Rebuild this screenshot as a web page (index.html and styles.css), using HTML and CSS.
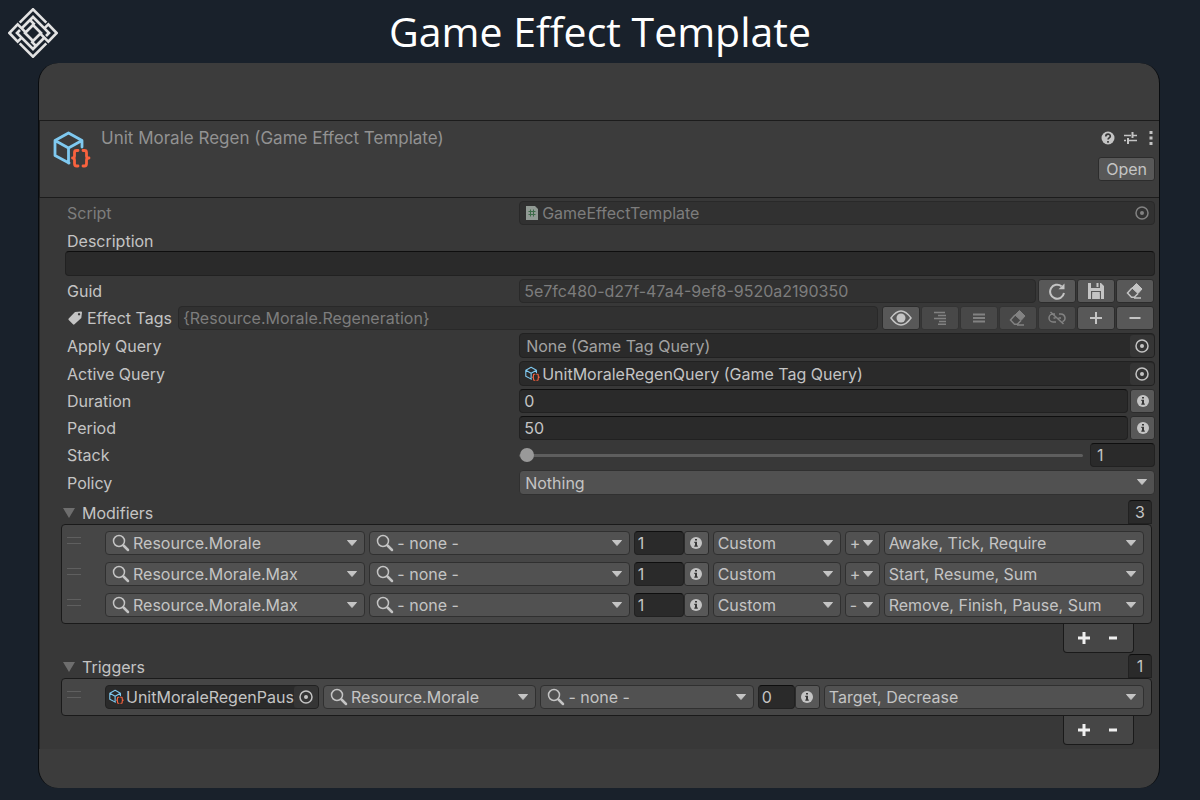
FILE: index.html
```
<!DOCTYPE html>
<html lang="en">
<head>
    <title>Game Effect Template</title>
    <meta charset="UTF-8">
    <link rel="stylesheet" href="styles.css">
</head>
<body>
    <!-- Shared icons -->
    <svg class="sprite" aria-hidden="true">
        <symbol id="cube" viewBox="0 0 38 38">
            <g fill="none" stroke-linejoin="round" stroke-linecap="round">
                <path d="M29 16V9.500L15.500 2 2 9.500V24.500L16 32M2 9.500L15.500 17 29 9.500M15.500 17V32" stroke="#7fc9f0" stroke-width="2.800"/>
                <path d="M25 19.500h-1.500q-2 0-2 2v3.500q0 2-2 2 2 0 2 2v3.500q0 2.500 2 2.500H25M30 19.500h1.500q2 0 2 2v3.500q0 2 2.500 2-2.500 0-2.500 2v3.500q0 2.500-2 2.500H30" stroke="#f9623e" stroke-width="2.800"/>
            </g>
        </symbol>
        <symbol id="search" viewBox="0 0 18 18">
            <circle cx="7" cy="7" r="5.500" fill="none" stroke="currentColor" stroke-width="1.500"/>
            <path d="M11.500 11.500L16 16" stroke="currentColor" stroke-width="2.500" stroke-linecap="round"/>
        </symbol>
        <symbol id="arrow" viewBox="0 0 10 6">
            <path d="M0.500 0.500h9L5 5.500z" fill="currentColor" stroke="currentColor" stroke-linejoin="round"/>
        </symbol>
        <symbol id="target" viewBox="0 0 14 14">
            <circle cx="7" cy="7" r="6" fill="none" stroke="currentColor" stroke-width="1.500"/>
            <circle cx="7" cy="7" r="2" fill="currentColor"/>
        </symbol>
        <symbol id="info" viewBox="0 0 12 12">
            <circle cx="6" cy="6" r="6" fill="currentColor"/>
            <path d="M5 2h2v1.600H5zM4.300 4.800H7v3.700h.8v1.200H4.300V8.500H5V6h-.7z" fill="#383838"/>
        </symbol>
        <symbol id="eraser" viewBox="0 0 18 18">
            <path d="M10.500 1.500L16 7l-4 4.500L6 6z" fill="currentColor" stroke="currentColor" stroke-linejoin="round"/>
            <path d="M6 6L1.500 11l4 4.200h2.800L12 11.500M8 16h7" fill="none" stroke="currentColor" stroke-width="1.500"/>
        </symbol>
    </svg>

    <header class="page-header">
        <svg class="logo" viewBox="0 0 150 150" fill="none" stroke="#e2e2e2" stroke-width="8">
            <path d="M35 44L75 4l40 40M35 106l40 40 40-40"/>
            <path d="M54 74L29 49 4 75l25 26 13-13M96 76l25 25 25-26-25-26-13 13"/>
            <path d="M40 88L27 75l9-9M110 62l13 13-9 9"/>
            <path d="M42 60l33-33 35 35M108 90l-33 33-35-35"/>
            <path d="M75 51l24 24-24 24-24-24z"/>
            <path d="M66 36l14 14M84 114l-14-14"/>
        </svg>
        <h1>Game Effect Template</h1>
    </header>

    <main class="panel">
        <section class="asset">
            <svg class="asset-icon"><use href="#cube"/></svg>
            <h2>Unit Morale Regen (Game Effect Template)</h2>
            <div class="asset-side">
                <div class="asset-tools">
                    <button type="button" class="plain" aria-label="Help">
                        <svg width="14" height="14" viewBox="0 0 14 14"><circle cx="7" cy="7" r="6.500" fill="currentColor"/><path d="M4.800 5.500c0-3 4.500-3 4.500-.3 0 1.700-2.200 1.700-2.200 3.300M7 10v1.700" fill="none" stroke="#383838" stroke-width="1.700"/></svg>
                    </button>
                    <button type="button" class="plain" aria-label="Presets">
                        <svg width="14" height="14" viewBox="0 0 14 14" fill="none" stroke="currentColor"><path d="M1 4.500h7M10 4.500h4M1 9.500h2M5 9.500h9" stroke-width="1.500"/><path d="M9.500 1v6M5 7v6" stroke-width="2"/></svg>
                    </button>
                    <button type="button" class="plain more" aria-label="More">
                        <svg width="4" height="14" viewBox="0 0 4 14" fill="currentColor"><path d="M.5 0h3v3h-3zM.5 5.500h3v3h-3zM.5 11h3v3h-3z"/></svg>
                    </button>
                </div>
                <button type="button" class="open">Open</button>
            </div>
        </section>

        <form class="inspector">
            <div class="row disabled">
                <label for="script">Script</label>
                <div class="field object">
                    <svg class="script-icon" viewBox="0 0 12 14"><path d="M0 0h9l3 3v11H0z" fill="#919a94"/><path d="M4.500 3.500v7M7.500 3.500v7M2.500 5.500h7M2.500 8.500h7" stroke="#3d6b49"/></svg>
                    <input type="text" id="script" value="GameEffectTemplate" disabled>
                    <button type="button" class="pick" aria-label="Pick script" disabled><svg><use href="#target"/></svg></button>
                </div>
            </div>
            <div class="description">
                <label for="description">Description</label>
                <input type="text" id="description" class="field">
            </div>
            <div class="row">
                <label for="guid">Guid</label>
                <div class="group">
                    <input type="text" id="guid" class="field" value="5e7fc480-d27f-47a4-9ef8-9520a2190350" disabled>
                    <div class="buttons">
                        <button type="button" aria-label="Regenerate"><svg width="18" height="18" viewBox="0 0 18 18"><path d="M13.500 4.200A7 7 0 1 0 16 11" fill="none" stroke="currentColor" stroke-width="2"/><path d="M16.500 1.500v5.800h-6z" fill="currentColor"/></svg></button>
                        <button type="button" aria-label="Save"><svg width="18" height="18" viewBox="0 0 18 18"><path fill="currentColor" fill-rule="evenodd" d="M1 1h13l3 3v13H1zM4 1v5h9V1zM4 9v8h1.200v-7h7.600v7H14V9z"/><path d="M9.500 1h2v4h-2zM5.500 12h7v5h-7z" fill="currentColor"/></svg></button>
                        <button type="button" aria-label="Clear"><svg width="18" height="18"><use href="#eraser"/></svg></button>
                    </div>
                </div>
            </div>
            <div class="tags">
                <label for="tags">
                    <svg width="14" height="14" viewBox="0 0 14 14"><path fill="currentColor" fill-rule="evenodd" d="M7 1l6-.5q1 0 1 1L13.300 7 6.500 13.300q-.8.700-1.500 0L.7 9q-.7-.7 0-1.500zM11 2a1.200 1.200 0 1 0 .1 0z"/></svg>
                    Effect Tags
                </label>
                <input type="text" id="tags" class="field" value="{Resource.Morale.Regeneration}" disabled>
                <div class="buttons">
                    <button type="button" aria-label="Show tags"><svg width="22" height="16" viewBox="0 0 22 16"><path d="M1 8q10-14 20 0-10 14-20 0z" fill="none" stroke="currentColor" stroke-width="1.500"/><circle cx="11" cy="8" r="4.500" fill="currentColor"/></svg></button>
                    <button type="button" aria-label="Tree view" disabled><svg width="14" height="14" viewBox="0 0 14 14"><path d="M1 1.500h11M5 4.500h8M1 7.500h12M6 10.500h7M5 13.200h8" stroke="currentColor" stroke-width="1.500"/></svg></button>
                    <button type="button" aria-label="List view" disabled><svg width="14" height="14" viewBox="0 0 14 14"><path d="M1 3.500h12M1 7h12M1 10.500h12" stroke="currentColor" stroke-width="2"/></svg></button>
                    <button type="button" aria-label="Clear tags" disabled><svg width="18" height="18"><use href="#eraser"/></svg></button>
                    <button type="button" aria-label="Unlink" disabled><svg width="18" height="14" viewBox="0 0 18 14" fill="none" stroke="currentColor" stroke-width="1.500"><path d="M7 3H5a4 4 0 0 0 0 8h3M11 3h2a4 4 0 0 1 1.500 7.700M5.500 7h2M10.500 7H13M2.500 1l13 12"/></svg></button>
                    <button type="button" aria-label="Add tag"><svg width="14" height="14" viewBox="0 0 14 14"><path d="M1 7h12M7 1v12" stroke="currentColor" stroke-width="2"/></svg></button>
                    <button type="button" aria-label="Remove tag"><svg width="14" height="14" viewBox="0 0 14 14"><path d="M1.500 7h11" stroke="currentColor" stroke-width="2"/></svg></button>
                </div>
            </div>
            <div class="row">
                <label for="apply">Apply Query</label>
                <div class="field object">
                    <input type="text" id="apply" class="empty" value="None (Game Tag Query)" readonly>
                    <button type="button" class="pick" aria-label="Pick apply query"><svg><use href="#target"/></svg></button>
                </div>
            </div>
            <div class="row">
                <label for="active">Active Query</label>
                <div class="field object">
                    <svg class="cube-small"><use href="#cube"/></svg>
                    <input type="text" id="active" value="UnitMoraleRegenQuery (Game Tag Query)" readonly>
                    <button type="button" class="pick" aria-label="Pick active query"><svg><use href="#target"/></svg></button>
                </div>
            </div>
            <div class="row">
                <label for="duration">Duration</label>
                <div class="group">
                    <input type="text" id="duration" class="field" value="0">
                    <button type="button" class="info" aria-label="Duration info"><svg><use href="#info"/></svg></button>
                </div>
            </div>
            <div class="row">
                <label for="period">Period</label>
                <div class="group">
                    <input type="text" id="period" class="field" value="50">
                    <button type="button" class="info" aria-label="Period info"><svg><use href="#info"/></svg></button>
                </div>
            </div>
            <div class="row">
                <label for="stack">Stack</label>
                <div class="group stack">
                    <input type="range" id="stack" min="1" max="100" value="1">
                    <input type="text" class="field" value="1" aria-label="Stack value">
                </div>
            </div>
            <div class="row">
                <label for="policy">Policy</label>
                <div class="drop policy">
                    <select id="policy"><option>Nothing</option></select>
                    <svg class="arrow"><use href="#arrow"/></svg>
                </div>
            </div>

            <section class="list">
                <div class="list-header">
                    <button type="button" class="plain"><svg width="12" height="10" viewBox="0 0 12 10"><path d="M0 0h12L6 10z" fill="#6e6e6e"/></svg>Modifiers</button>
                    <input type="text" class="field count" value="3" aria-label="Modifiers count">
                </div>
                <div class="items">
                    <div class="item">
                        <span class="handle"></span>
                        <div class="drop with-search"><svg class="search"><use href="#search"/></svg><select aria-label="Resource"><option>Resource.Morale</option></select><svg class="arrow"><use href="#arrow"/></svg></div>
                        <div class="drop with-search"><svg class="search"><use href="#search"/></svg><select aria-label="Source"><option>- none -</option></select><svg class="arrow"><use href="#arrow"/></svg></div>
                        <div class="value"><input type="text" class="field" value="1" aria-label="Value"><button type="button" class="info" aria-label="Value info"><svg><use href="#info"/></svg></button></div>
                        <div class="drop kind"><select aria-label="Kind"><option>Custom</option></select><svg class="arrow"><use href="#arrow"/></svg></div>
                        <div class="drop sign"><select aria-label="Sign"><option>+</option></select><svg class="arrow"><use href="#arrow"/></svg></div>
                        <div class="drop"><select aria-label="Events"><option>Awake, Tick, Require</option></select><svg class="arrow"><use href="#arrow"/></svg></div>
                    </div>
                    <div class="item">
                        <span class="handle"></span>
                        <div class="drop with-search"><svg class="search"><use href="#search"/></svg><select aria-label="Resource"><option>Resource.Morale.Max</option></select><svg class="arrow"><use href="#arrow"/></svg></div>
                        <div class="drop with-search"><svg class="search"><use href="#search"/></svg><select aria-label="Source"><option>- none -</option></select><svg class="arrow"><use href="#arrow"/></svg></div>
                        <div class="value"><input type="text" class="field" value="1" aria-label="Value"><button type="button" class="info" aria-label="Value info"><svg><use href="#info"/></svg></button></div>
                        <div class="drop kind"><select aria-label="Kind"><option>Custom</option></select><svg class="arrow"><use href="#arrow"/></svg></div>
                        <div class="drop sign"><select aria-label="Sign"><option>+</option></select><svg class="arrow"><use href="#arrow"/></svg></div>
                        <div class="drop"><select aria-label="Events"><option>Start, Resume, Sum</option></select><svg class="arrow"><use href="#arrow"/></svg></div>
                    </div>
                    <div class="item">
                        <span class="handle"></span>
                        <div class="drop with-search"><svg class="search"><use href="#search"/></svg><select aria-label="Resource"><option>Resource.Morale.Max</option></select><svg class="arrow"><use href="#arrow"/></svg></div>
                        <div class="drop with-search"><svg class="search"><use href="#search"/></svg><select aria-label="Source"><option>- none -</option></select><svg class="arrow"><use href="#arrow"/></svg></div>
                        <div class="value"><input type="text" class="field" value="1" aria-label="Value"><button type="button" class="info" aria-label="Value info"><svg><use href="#info"/></svg></button></div>
                        <div class="drop kind"><select aria-label="Kind"><option>Custom</option></select><svg class="arrow"><use href="#arrow"/></svg></div>
                        <div class="drop sign"><select aria-label="Sign"><option>-</option></select><svg class="arrow"><use href="#arrow"/></svg></div>
                        <div class="drop"><select aria-label="Events"><option>Remove, Finish, Pause, Sum</option></select><svg class="arrow"><use href="#arrow"/></svg></div>
                    </div>
                </div>
                <div class="list-footer">
                    <button type="button" class="plain" aria-label="Add modifier"><svg width="12" height="12" viewBox="0 0 12 12"><path d="M0 6h12M6 0v12" stroke="currentColor" stroke-width="3"/></svg></button>
                    <button type="button" class="plain" aria-label="Remove modifier"><svg width="12" height="12" viewBox="0 0 12 12"><path d="M2 6h8" stroke="currentColor" stroke-width="3"/></svg></button>
                </div>
            </section>

            <section class="list">
                <div class="list-header">
                    <button type="button" class="plain"><svg width="12" height="10" viewBox="0 0 12 10"><path d="M0 0h12L6 10z" fill="#6e6e6e"/></svg>Triggers</button>
                    <input type="text" class="field count" value="1" aria-label="Triggers count">
                </div>
                <div class="items">
                    <div class="item trigger">
                        <span class="handle"></span>
                        <div class="field object">
                            <svg class="cube-small"><use href="#cube"/></svg>
                            <input type="text" value="UnitMoraleRegenPauseQuery" aria-label="Query" readonly>
                            <button type="button" class="pick" aria-label="Pick query"><svg><use href="#target"/></svg></button>
                        </div>
                        <div class="drop with-search"><svg class="search"><use href="#search"/></svg><select aria-label="Resource"><option>Resource.Morale</option></select><svg class="arrow"><use href="#arrow"/></svg></div>
                        <div class="drop with-search"><svg class="search"><use href="#search"/></svg><select aria-label="Source"><option>- none -</option></select><svg class="arrow"><use href="#arrow"/></svg></div>
                        <div class="value"><input type="text" class="field" value="0" aria-label="Value"><button type="button" class="info" aria-label="Value info"><svg><use href="#info"/></svg></button></div>
                        <div class="drop events"><select aria-label="Events"><option>Target, Decrease</option></select><svg class="arrow"><use href="#arrow"/></svg></div>
                    </div>
                </div>
                <div class="list-footer">
                    <button type="button" class="plain" aria-label="Add trigger"><svg width="12" height="12" viewBox="0 0 12 12"><path d="M0 6h12M6 0v12" stroke="currentColor" stroke-width="3"/></svg></button>
                    <button type="button" class="plain" aria-label="Remove trigger"><svg width="12" height="12" viewBox="0 0 12 12"><path d="M2 6h8" stroke="currentColor" stroke-width="3"/></svg></button>
                </div>
            </section>
        </form>
    </main>
</body>
</html>
```
FILE: styles.css
```
* {
    box-sizing: border-box;
}

body {
    margin: 0;
    background: #19212b;
    color: #c4c4c4;
    font-family: Inter, sans-serif;
    font-size: 16px;
    line-height: 20px;
}

svg {
    display: block;
    flex: none;
}

input, select, button {
    min-width: 0;
    margin: 0;
    font: inherit;
    color: inherit;
}

button {
    display: flex;
    align-items: center;
    justify-content: center;
    padding: 0;
    background: #585858;
    border: 1px solid #2c2c2c;
    border-radius: 3px;
}

button:disabled {
    background: #484848;
    border-color: #343434;
    color: #828282;
}

.plain {
    background: none;
    border: none;
}

.sprite {
    display: none;
}

/* Page header */
.page-header {
    display: grid;
    grid-template-columns: 50px 1fr 50px;
    align-items: center;
    height: 63px;
    padding: 3px 8px 0;
}

.logo {
    width: 50px;
    height: 50px;
}

h1 {
    margin: 0;
    padding-bottom: 4px;
    color: #fff;
    font-family: "Open Sans", "Noto Sans", sans-serif;
    font-size: 41px;
    font-weight: 400;
    line-height: 54px;
    text-align: center;
}

/* Panel */
.panel {
    margin: 0 40px 13px 38px;
    padding: 57px 0 39px;
    background: #3c3c3c;
    border: solid #080b0e;
    border-width: 0 1px;
    border-radius: 20px;
}

.asset {
    display: flex;
    padding: 7px 4px 16px 13px;
    border: solid #1c1c1c;
    border-width: 1px 0 1px 1px;
}

.asset-icon {
    width: 38px;
    height: 38px;
    margin: 3px 10px 0 0;
}

h2 {
    flex: 1;
    margin: 0;
    color: #929292;
    font-size: 17px;
    font-weight: 400;
}

.asset-side {
    display: flex;
    flex-direction: column;
    align-items: flex-end;
    gap: 9px;
}

.asset-tools {
    display: flex;
    gap: 8px;
    height: 20px;
    padding-right: 2px;
}

.more {
    padding-left: 4px;
}

.open {
    height: 24px;
    padding: 0 7px;
}

/* Inspector form */
.inspector {
    display: flex;
    flex-direction: column;
    gap: 3px;
    padding: 3px 4px 4px 25px;
    background: #383838;
    border-left: 1px solid #242424;
}

.row {
    display: grid;
    grid-template-columns: 5fr 7fr;
    align-items: center;
}

.row > label, .description label {
    padding-left: 2px;
}

.disabled {
    color: #7d7d7d;
}

.field {
    width: 100%;
    height: 24px;
    padding: 0 4px;
    background: #2a2a2a;
    border: 1px solid #212121;
    border-top-color: #0e0e0e;
    border-radius: 4px;
}

.field:disabled, .disabled .field {
    background: #313131;
    border-color: #292929;
    color: #7d7d7d;
}

.description {
    display: flex;
    flex-direction: column;
    padding-top: 3px;
}

.description .field {
    height: 25px;
}

.object {
    display: flex;
    align-items: center;
    min-width: 0;
    height: 25px;
    padding: 0 0 0 5px;
    border-top-color: #212121;
}

.disabled .object {
    height: 24px;
}

.object input {
    flex: 1;
    height: 22px;
    padding: 0;
    background: none;
    border: none;
}

.object .empty {
    padding-left: 1px;
    color: #a2a2a2;
}

.pick {
    flex: none;
    width: 24px;
    height: 22px;
    background: #353535;
    border: none;
}

.pick:disabled {
    background: none;
}

.pick svg {
    width: 14px;
    height: 14px;
}

.script-icon {
    width: 12px;
    height: 14px;
    margin: 0 4px 0 1px;
}

.cube-small {
    width: 15px;
    height: 16px;
    margin-right: 2px;
}

.group {
    display: flex;
    gap: 2px;
}

.buttons {
    display: flex;
    flex: none;
    gap: 1px;
    padding-right: 1px;
}

.buttons button {
    width: 38px;
    height: 24px;
}

.tags {
    display: flex;
    align-items: center;
    gap: 4px;
}

.tags label {
    display: flex;
    flex: none;
    align-items: center;
    gap: 5px;
    padding: 0 2px 0 3px;
}

.tags .field {
    flex: 1;
}

.info {
    flex: none;
    width: 25px;
    height: 24px;
}

.info svg {
    width: 12px;
    height: 12px;
}

.stack {
    align-items: center;
    gap: 7px;
}

.stack [type=range] {
    flex: 1;
    height: 14px;
    background: none;
    appearance: none;
}

.stack [type=range]::-webkit-slider-runnable-track {
    height: 3px;
    background: #5e5e5e;
    border-radius: 2px;
}

.stack [type=range]::-webkit-slider-thumb {
    width: 14px;
    height: 14px;
    margin: -6px 0 0 1px;
    background: #999;
    border-radius: 50%;
    appearance: none;
}

.stack .field {
    width: 65px;
    padding-left: 6px;
}

/* Drop-downs */
.drop {
    position: relative;
    flex: 1;
}

.drop select {
    display: block;
    width: 100%;
    height: 24px;
    padding: 0 20px 0 4px;
    background: #515151;
    border: 1px solid #303030;
    border-radius: 4px;
    appearance: none;
}

.drop .arrow {
    position: absolute;
    top: 9px;
    right: 8px;
    width: 10px;
    height: 6px;
    pointer-events: none;
}

.drop .search {
    position: absolute;
    top: 3px;
    left: 7px;
    width: 18px;
    height: 18px;
    pointer-events: none;
}

.with-search select {
    padding-left: 27px;
}

.policy select {
    height: 25px;
    padding-left: 5px;
}

/* Reorderable lists */
.list {
    margin: 2px 3px 0 -4px;
}

.list + .list {
    margin-top: -2px;
}

.list-header {
    display: flex;
    justify-content: space-between;
}

.list-header .plain {
    gap: 7px;
    padding: 2px 0 0 2px;
}

.count {
    width: 24px;
    padding: 0;
    border-radius: 4px 4px 0 0;
    text-align: center;
}

.items {
    display: flex;
    flex-direction: column;
    gap: 7px;
    padding: 6px 7px 6px 5px;
    background: #464646;
    border: 1px solid #1a1a1a;
    border-radius: 4px;
}

.item {
    display: flex;
    gap: 4px;
}

.handle {
    width: 14px;
    height: 7px;
    margin: 6px 20px 0 0;
    border: solid #5f5f5f;
    border-width: 1px 0;
}

.value {
    display: flex;
    width: 75px;
}

.value .field {
    flex: 1;
    padding: 0 3px;
}

.kind {
    flex: 0 0 128px;
}

.sign {
    flex: 0 0 35px;
}

.sign .arrow {
    right: 7px;
}

.sign select {
    padding-right: 0;
}

.trigger .object {
    flex: 0 0 214px;
    height: 24px;
    padding-left: 3px;
}

.trigger .value {
    width: 62px;
}

.trigger .events {
    flex-grow: 1.5;
}

.list-footer {
    display: flex;
    align-items: center;
    justify-content: center;
    gap: 17px;
    width: 71px;
    height: 29px;
    margin: 0 18px 0 auto;
    background: #464646;
    border: 1px solid #1a1a1a;
    border-top: none;
    border-radius: 0 0 4px 4px;
    color: #f0f0f0;
}
```
